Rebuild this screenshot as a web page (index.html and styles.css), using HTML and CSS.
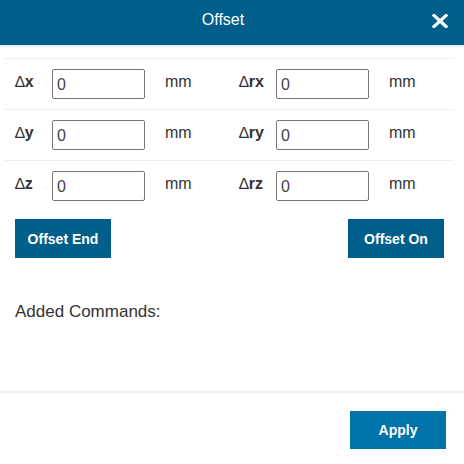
FILE: index.html
```html
<!DOCTYPE html>
<html>
<head>
<meta charset="utf-8">
<link rel="stylesheet" href="styles.css">
</head>
<body>
<div class="dialog">
  <header class="header">
    <div class="title">Offset</div>
    <button class="close" aria-label="Close">
      <svg width="16" height="14" viewBox="0 0 16 14"><path d="M2 1.5 L14 12.5 M14 1.5 L2 12.5" stroke="#fff" stroke-width="3.2" stroke-linecap="square" fill="none"/></svg>
    </button>
  </header>
  <main class="content">
    <div class="row">
      <div class="field"><span class="label">&#8710;<b>x</b></span><input class="input" value="0"><span class="unit">mm</span></div>
      <div class="field"><span class="label">&#8710;<b>rx</b></span><input class="input" value="0"><span class="unit">mm</span></div>
    </div>
    <div class="row">
      <div class="field"><span class="label">&#8710;<b>y</b></span><input class="input" value="0"><span class="unit">mm</span></div>
      <div class="field"><span class="label">&#8710;<b>ry</b></span><input class="input" value="0"><span class="unit">mm</span></div>
    </div>
    <div class="row">
      <div class="field"><span class="label">&#8710;<b>z</b></span><input class="input" value="0"><span class="unit">mm</span></div>
      <div class="field"><span class="label">&#8710;<b>rz</b></span><input class="input" value="0"><span class="unit">mm</span></div>
    </div>
    <div class="actions">
      <button class="btn">Offset End</button>
      <button class="btn">Offset On</button>
    </div>
    <div class="added">Added Commands:</div>
  </main>
  <footer class="footer">
    <button class="btn btn-apply">Apply</button>
  </footer>
</div>
</body>
</html>
```
FILE: styles.css
```css
* { box-sizing: border-box; }
html, body { margin: 0; padding: 0; background: #fff; }
body {
  font-family: "Liberation Sans", Arial, sans-serif;
  color: #333;
  font-size: 16px;
}
.dialog {
  width: 464px;
  height: 464px;
  display: flex;
  flex-direction: column;
}
.header {
  height: 45px;
  background: #005e8a;
  display: flex;
  align-items: flex-start;
  padding-right: 16px;
  box-shadow: 0 2px 0 #f1f1f1;
}
.title {
  flex: 1;
  text-align: center;
  color: #fff;
  font-size: 16px;
  line-height: 18px;
  padding-top: 11px;
  padding-left: 14px;
}
.close {
  margin-top: 14px;
  width: 16px;
  height: 14px;
  padding: 0;
  border: 0;
  background: none;
  display: flex;
}
.content {
  flex: 1;
  padding: 13px 10px 0 5px;
}
.row {
  display: grid;
  grid-template-columns: 224px 224px;
  border-top: 1px solid #eeeeee;
  padding: 10px 0 10px 10px;
}
.field {
  display: flex;
  align-items: center;
}
.label {
  width: 37px;
  font-size: 16px;
  margin-top: -4px;
}
.label b { font-weight: bold; }
.input {
  width: 93px;
  height: 30px;
  border: 1px solid #767676;
  border-radius: 2px;
  padding: 2px 4px 0;
  font-family: "Liberation Sans", Arial, sans-serif;
  font-size: 16px;
  color: #444;
}
.unit {
  margin-left: 20px;
  margin-top: -4px;
}
.actions {
  display: flex;
  justify-content: space-between;
  padding: 0 10px;
  margin-top: 8px;
}
.btn {
  width: 96px;
  height: 39px;
  border: 0;
  background: #005e8a;
  color: #fff;
  font-family: "Liberation Sans", Arial, sans-serif;
  font-weight: bold;
  font-size: 14px;
  padding: 0;
}
.added {
  padding-left: 10px;
  margin-top: 44px;
  font-size: 17px;
}
.footer {
  border-top: 2px solid #f0f0f0;
  height: 73px;
  display: flex;
  justify-content: flex-end;
  padding: 18px 18px 0 0;
}
.btn-apply {
  background: #0073aa;
  height: 38px;
}
```
